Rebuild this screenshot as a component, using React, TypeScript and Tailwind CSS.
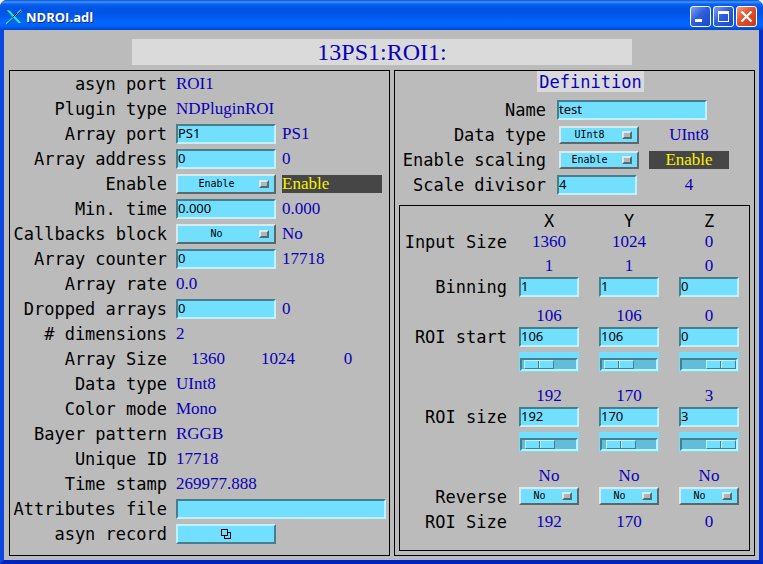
import type { ReactNode } from "react";

const field =
  "block h-5 rounded-none border-2 border-t-[#467e8e] border-l-[#467e8e] border-b-[#c0f1ff] border-r-[#c0f1ff] bg-[#73dfff] px-0 pt-0 pb-0.5 font-['Noto_Sans',sans-serif] text-[13px] leading-4 text-black outline-none";

const reading = "font-['Liberation_Serif',serif] text-[17px] leading-5 text-[#0a00b8] whitespace-nowrap";

const alarm = "flex h-[18px] items-center bg-[#464646] font-['Liberation_Serif',serif] text-[17px] leading-[18px] text-[#fbf300]";

function Field({ id, value, width, label }: { id: string; value: string; width: string; label?: string }) {
  return <input id={id} aria-label={label} type="text" defaultValue={value} className={`${field} ${width}`} />;
}

function Menu({ id, options, size, label }: { id: string; options: string[]; size: string; label?: string }) {
  return (
    <div className={`relative ${size}`}>
      <select
        id={id}
        aria-label={label}
        className="block h-full w-full appearance-none rounded-none border-2 border-t-[#dbe8ec] border-l-[#dbe8ec] border-b-[#5c676b] border-r-[#5c676b] bg-[#73dfff] py-0 pr-[19px] pl-0 text-center text-[10px] leading-3 text-black [text-align-last:center]"
      >
        {options.map((o) => (
          <option key={o}>{o}</option>
        ))}
      </select>
      <span className="pointer-events-none absolute top-1/2 right-[7px] h-2 w-[10px] -translate-y-1/2 border-2 border-t-[#dbe8ec] border-l-[#dbe8ec] border-b-[#5c676b] border-r-[#5c676b] bg-[#a9b8be]" />
    </div>
  );
}

function Slider({ label, min = 0, max, value }: { label: string; min?: number; max: number; value: number }) {
  return (
    <div className="mt-1 flex h-5 w-[60px] items-end justify-center bg-[#73dfff] pb-px">
      <input
        type="range"
        aria-label={label}
        min={min}
        max={max}
        defaultValue={value}
        className="m-0 block h-[13px] w-[58px] appearance-none border-2 border-t-[#467e8e] border-l-[#467e8e] border-b-[#c0f1ff] border-r-[#c0f1ff] bg-[#62bdd9] [&::-webkit-slider-thumb]:h-[9px] [&::-webkit-slider-thumb]:w-[30px] [&::-webkit-slider-thumb]:appearance-none [&::-webkit-slider-thumb]:rounded-none [&::-webkit-slider-thumb]:border [&::-webkit-slider-thumb]:border-t-[#c0f1ff] [&::-webkit-slider-thumb]:border-l-[#c0f1ff] [&::-webkit-slider-thumb]:border-b-[#467e8e] [&::-webkit-slider-thumb]:border-r-[#467e8e] [&::-webkit-slider-thumb]:bg-[linear-gradient(90deg,#73dfff_13px,#467e8e_13px,#467e8e_14px,#c0f1ff_14px,#c0f1ff_15px,#73dfff_15px)]"
      />
    </div>
  );
}

function Row({ label, htmlFor, children }: { label: string; htmlFor?: string; children: ReactNode }) {
  return (
    <div className="flex h-5 items-center">
      <label htmlFor={htmlFor} className="mr-[9px] flex-1 text-right whitespace-nowrap">
        {label}
      </label>
      <div className="flex w-[213px] shrink-0 items-center gap-[6px]">{children}</div>
    </div>
  );
}

function Text({ children }: { children: ReactNode }) {
  return <output className={reading}>{children}</output>;
}

const onOff = ["Enable", "Disable"];
const noYes = ["No", "Yes"];
const types = ["UInt8", "Int8", "UInt16", "Int16"];

function PluginPanel() {
  return (
    <section className="flex flex-col gap-[5px] border border-black pt-[3px]">
      <Row label="asyn port"><Text>ROI1</Text></Row>
      <Row label="Plugin type"><Text>NDPluginROI</Text></Row>
      <Row label="Array port" htmlFor="port">
        <Field id="port" value="PS1" width="w-[100px]" />
        <Text>PS1</Text>
      </Row>
      <Row label="Array address" htmlFor="addr">
        <Field id="addr" value="0" width="w-[100px]" />
        <Text>0</Text>
      </Row>
      <Row label="Enable" htmlFor="enable">
        <Menu id="enable" options={onOff} size="h-5 w-[100px]" />
        <output className={`${alarm} w-[100px]`}>Enable</output>
      </Row>
      <Row label="Min. time" htmlFor="mintime">
        <Field id="mintime" value="0.000" width="w-[100px]" />
        <Text>0.000</Text>
      </Row>
      <Row label="Callbacks block" htmlFor="block">
        <Menu id="block" options={noYes} size="h-5 w-[100px]" />
        <Text>No</Text>
      </Row>
      <Row label="Array counter" htmlFor="counter">
        <Field id="counter" value="0" width="w-[100px]" />
        <Text>17718</Text>
      </Row>
      <Row label="Array rate"><Text>0.0</Text></Row>
      <Row label="Dropped arrays" htmlFor="dropped">
        <Field id="dropped" value="0" width="w-[100px]" />
        <Text>0</Text>
      </Row>
      <Row label="# dimensions"><Text>2</Text></Row>
      <Row label="Array Size">
        {["1360", "1024", "0"].map((n) => (
          <output key={n} className={`${reading} w-16 text-center`}>{n}</output>
        ))}
      </Row>
      <Row label="Data type"><Text>UInt8</Text></Row>
      <Row label="Color mode"><Text>Mono</Text></Row>
      <Row label="Bayer pattern"><Text>RGGB</Text></Row>
      <Row label="Unique ID"><Text>17718</Text></Row>
      <Row label="Time stamp"><Text>269977.888</Text></Row>
      <Row label="Attributes file" htmlFor="attrs">
        <Field id="attrs" value="" width="w-[210px]" />
      </Row>
      <Row label="asyn record" htmlFor="record">
        <button
          id="record"
          type="button"
          className="flex h-5 w-[100px] items-center justify-center border-2 border-t-[#c0f1ff] border-l-[#c0f1ff] border-b-[#467e8e] border-r-[#467e8e] bg-[#73dfff]"
        >
          <svg width="10" height="10" viewBox="0 0 10 10" fill="black" fillRule="evenodd" shapeRendering="crispEdges">
            <path d="M0 0h7v7H0zM1 1v5h5V1z" />
            <path d="M7 3h3v7H3V7h1v2h5V4H7z" />
          </svg>
        </button>
      </Row>
    </section>
  );
}

function DefinitionRow({ label, htmlFor, control, children }: { label: string; htmlFor: string; control: ReactNode; children?: ReactNode }) {
  return (
    <div className="flex h-5 items-center">
      <label htmlFor={htmlFor} className="mr-[11px] flex-1 text-right whitespace-nowrap">{label}</label>
      <div className="flex w-[197px] shrink-0 items-center">
        <div className="w-[92px] shrink-0">{control}</div>
        {children}
      </div>
    </div>
  );
}

const axes = ["X", "Y", "Z"];

function AxisRow({ label, cells }: { label?: string; cells: ReactNode[] }) {
  return (
    <div className="flex min-h-5 items-start">
      <div className="mr-3 flex-1 text-right whitespace-nowrap">{label}</div>
      <div className="mr-[10px] grid w-[220px] shrink-0 grid-cols-3 gap-5">
        {cells.map((c, i) => (
          <div key={i} className="text-center">{c}</div>
        ))}
      </div>
    </div>
  );
}

function values(list: string[]) {
  return list.map((v, i) => <output key={i} className={`${reading} block`}>{v}</output>);
}

function fields(name: string, list: string[]) {
  return list.map((v, i) => (
    <Field key={i} id={`${name}-${i}`} label={`${name} ${axes[i]}`} value={v} width="w-full" />
  ));
}

function RoiPanel() {
  return (
    <section className="mx-1 mt-[10px] mb-1 flex flex-1 flex-col border border-black pt-[5px]">
      <AxisRow cells={axes} />
      <div className="mt-px">
        <AxisRow label="Input Size" cells={values(["1360", "1024", "0"])} />
      </div>
      <div className="mt-1 flex h-[50px] flex-col gap-px">
        <AxisRow cells={values(["1", "1", "0"])} />
        <AxisRow label="Binning" cells={fields("Binning", ["1", "1", "0"])} />
      </div>
      <div className="flex h-20 flex-col gap-px">
        <AxisRow cells={values(["106", "106", "0"])} />
        <AxisRow label="ROI start" cells={fields("ROI start", ["106", "106", "0"])} />
        <AxisRow
          cells={[
            <Slider label="ROI start X slider" max={1360} value={106} />,
            <Slider label="ROI start Y slider" max={1024} value={106} />,
            <Slider label="ROI start Z slider" min={-1} max={0} value={0} />,
          ]}
        />
      </div>
      <div className="flex h-20 flex-col gap-px">
        <AxisRow cells={values(["192", "170", "3"])} />
        <AxisRow label="ROI size" cells={fields("ROI size", ["192", "170", "3"])} />
        <AxisRow
          cells={[
            <Slider label="ROI size X slider" max={1360} value={192} />,
            <Slider label="ROI size Y slider" max={1024} value={170} />,
            <Slider label="ROI size Z slider" max={3} value={3} />,
          ]}
        />
      </div>
      <div className="flex flex-col gap-px">
        <AxisRow cells={values(["No", "No", "No"])} />
        <AxisRow
          label="Reverse"
          cells={axes.map((a) => (
            <Menu key={a} id={`reverse-${a}`} label={`Reverse ${a}`} options={noYes} size="h-[18px] w-full" />
          ))}
        />
        <div className="mt-1">
          <AxisRow label="ROI Size" cells={values(["192", "170", "0"])} />
        </div>
      </div>
    </section>
  );
}

function DefinitionPanel() {
  return (
    <section className="flex flex-col border border-black">
      <div className="flex justify-center pl-8">
        <h2 className="bg-[#dadada] px-0.5 pt-px leading-5 text-[#0a00b8]">Definition</h2>
      </div>
      <div className="mt-2 flex flex-col gap-[5px]">
        <DefinitionRow label="Name" htmlFor="name" control={<Field id="name" value="test" width="w-[150px]" />} />
        <DefinitionRow label="Data type" htmlFor="dtype" control={<div className="pl-0.5"><Menu id="dtype" options={types} size="h-[18px] w-20" /></div>}>
          <output className={`${reading} w-20 text-center`}>UInt8</output>
        </DefinitionRow>
        <DefinitionRow label="Enable scaling" htmlFor="scaling" control={<div className="pl-0.5"><Menu id="scaling" options={onOff} size="h-[18px] w-20" /></div>}>
          <output className={`${alarm} w-20 justify-center`}>Enable</output>
        </DefinitionRow>
        <DefinitionRow label="Scale divisor" htmlFor="divisor" control={<Field id="divisor" value="4" width="w-20" />}>
          <output className={`${reading} w-20 text-center`}>4</output>
        </DefinitionRow>
      </div>
      <RoiPanel />
    </section>
  );
}

const caption =
  "flex h-[21px] w-[21px] items-center justify-center rounded-[3px] border border-white";

function TitleBar() {
  return (
    <header className="flex h-[30px] items-center bg-[linear-gradient(180deg,#0a4fd0_0px,#3f95ff_2px,#0b63ee_4px,#0054e3_8px,#0055e6_14px,#0066ff_22px,#0063fa_26px,#0045c8_30px)] pt-[3px] pr-[6px] pl-[6px]">
      <svg width="16" height="16" viewBox="0 0 16 16" aria-hidden="true">
        <path d="M15.500 1L.5 15" stroke="#10e8f8" strokeWidth="2" />
        <path d="M15.500 1.500L1 15.500" stroke="#041030" strokeWidth="1" />
        <path d="M0 1h3.500L16 14.500h-3.500z" fill="#10f0f8" stroke="#0a3a70" strokeWidth=".5" />
        <path d="M11 4L6.500 8.500" stroke="#041030" strokeWidth="1" />
      </svg>
      <h1 className="ml-1 flex-1 font-['Open_Sans',sans-serif] text-[13px] leading-5 font-bold text-white [text-shadow:1px_1px_#0a2a80]">
        NDROI.adl
      </h1>
      <div className="flex gap-0.5">
        <button type="button" aria-label="Minimize" className={`${caption} bg-[linear-gradient(135deg,#7ea2f4,#2e5fdc_45%,#1d48c4)]`}>
          <svg width="17" height="17" viewBox="0 0 17 17"><path d="M3 11h7v3H3z" fill="white" /></svg>
        </button>
        <button type="button" aria-label="Maximize" className={`${caption} bg-[linear-gradient(135deg,#7ea2f4,#2e5fdc_45%,#1d48c4)]`}>
          <svg width="17" height="17" viewBox="0 0 17 17"><path d="M3 3h11v11H3zM4 6v7h9V6z" fill="white" fillRule="evenodd" /></svg>
        </button>
        <button type="button" aria-label="Close" className={`${caption} bg-[linear-gradient(135deg,#f0a080,#e0512c_45%,#c83a12)]`}>
          <svg width="17" height="17" viewBox="0 0 17 17"><path d="M3.500 3.500l10 10M13.500 3.500l-10 10" stroke="white" strokeWidth="2.200" /></svg>
        </button>
      </div>
    </header>
  );
}

export default function App() {
  return (
    <div className="min-h-screen bg-[#f4f2e8] font-['DejaVu_Sans_Mono',monospace] text-[17px] leading-5 text-black">
      <div className="flex min-h-screen flex-col overflow-hidden rounded-t-[7px] bg-[#0040d8]">
        <TitleBar />
        <main className="flex flex-1 flex-col border-4 border-t-0 border-r-[#0030d0] border-b-[#0022c0] border-l-[#0c48e0] bg-[#bbbbbb] pt-[9px] pr-1 pb-1 pl-[5px]">
          <div className="mx-auto h-[26px] w-[67%] bg-[#dadada] text-center font-['Liberation_Serif',serif] text-[24px] leading-[26px] text-[#0a00b8]">
            13PS1:ROI1:
          </div>
          <div className="mt-[5px] grid flex-1 grid-cols-[381fr_361fr] gap-1">
            <PluginPanel />
            <DefinitionPanel />
          </div>
        </main>
      </div>
    </div>
  );
}
